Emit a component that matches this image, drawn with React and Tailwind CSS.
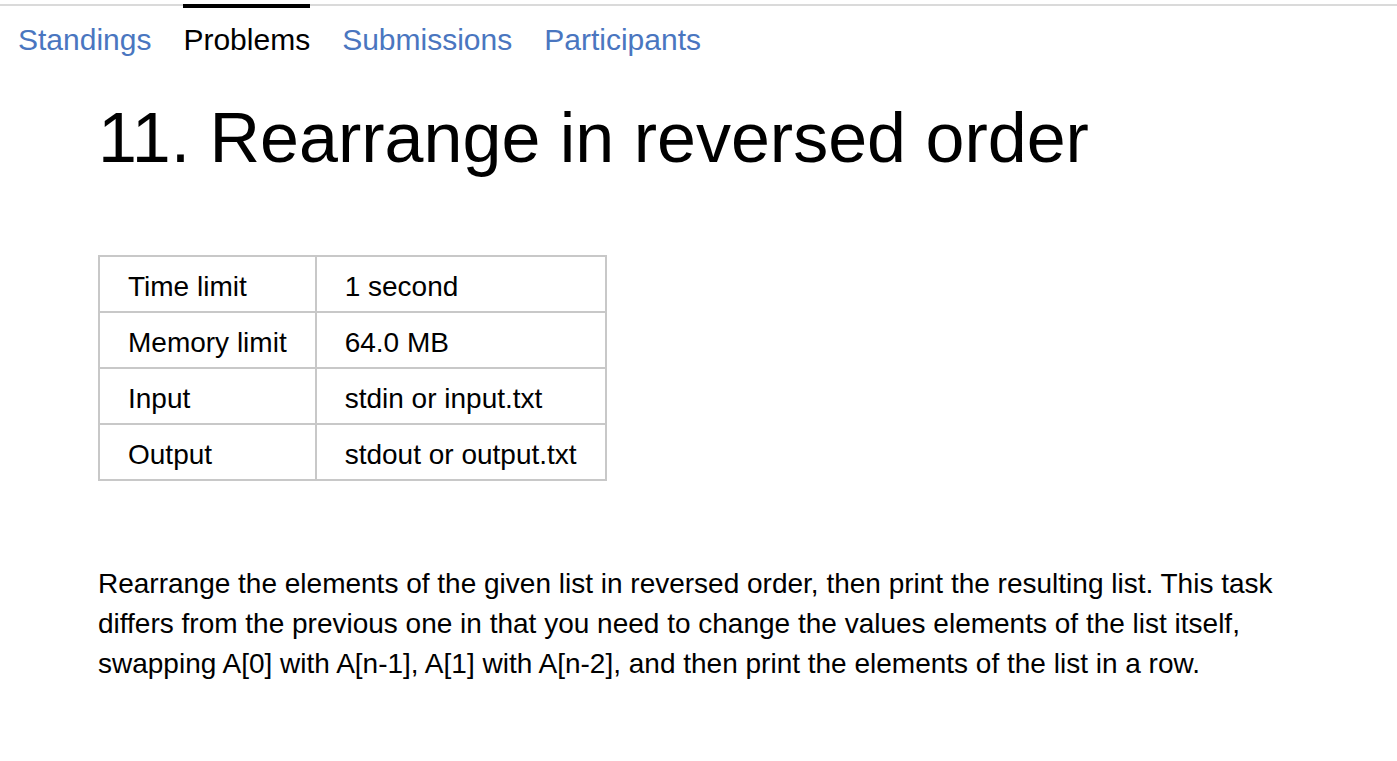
import React from 'react';

const tabs = [
    { name: 'Standings', active: false },
    { name: 'Problems', active: true },
    { name: 'Submissions', active: false },
    { name: 'Participants', active: false },
];

const limits = [
    ['Time limit', '1 second'],
    ['Memory limit', '64.0 MB'],
    ['Input', 'stdin or input.txt'],
    ['Output', 'stdout or output.txt'],
];

export default function App() {
    return (
        <div className="min-h-screen bg-white pt-[4px] text-black" style={{ fontFamily: '"Liberation Sans", Arial, sans-serif' }}>
            <div className="flex gap-[32px] border-t-2 border-[#dadada] pl-[18px]">
                {tabs.map((tab) => (
                    <div
                        key={tab.name}
                        className={
                            '-mt-[2px] border-t-4 pt-[14px] text-[30px] leading-[36px] ' +
                            (tab.active ? 'border-black text-black' : 'border-transparent text-[#4a76c0]')
                        }
                    >
                        {tab.name}
                    </div>
                ))}
            </div>

            <div className="mx-[98px]">
                <h1 className="mt-[40px] text-[70px] font-normal leading-[80px]">11. Rearrange in reversed order</h1>

                <table className="mt-[77px] border-collapse text-[28px] leading-[32px]">
                    <tbody>
                        {limits.map(([label, value]) => (
                            <tr key={label}>
                                <td className="border-2 border-[#c8c8c8] px-[28px] pt-[14px] pb-[8px]">{label}</td>
                                <td className="border-2 border-[#c8c8c8] px-[28px] pt-[14px] pb-[8px]">{value}</td>
                            </tr>
                        ))}
                    </tbody>
                </table>

                <p className="mt-[83px] text-[28px] leading-[40px]">
                    Rearrange the elements of the given list in reversed order, then print the resulting list. This task differs from the previous one in that you need to change the values elements of the list itself, swapping A[0] with A[n-1], A[1] with A[n-2], and then print the elements of the list in a row.
                </p>
            </div>
        </div>
    );
}
